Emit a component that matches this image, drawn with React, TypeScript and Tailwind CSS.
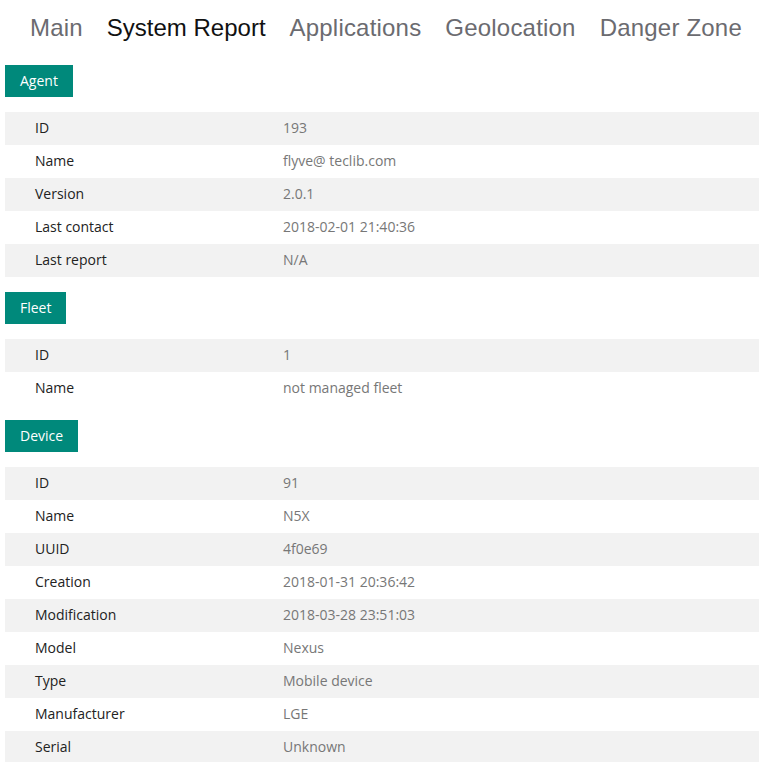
import React from 'react';

const TABS = ['Main', 'System Report', 'Applications', 'Geolocation', 'Danger Zone'];

const SECTIONS: { title: string; rows: [string, string][] }[] = [
    {
        title: 'Agent',
        rows: [
            ['ID', '193'],
            ['Name', 'flyve@ teclib.com'],
            ['Version', '2.0.1'],
            ['Last contact', '2018-02-01 21:40:36'],
            ['Last report', 'N/A'],
        ],
    },
    {
        title: 'Fleet',
        rows: [
            ['ID', '1'],
            ['Name', 'not managed fleet'],
        ],
    },
    {
        title: 'Device',
        rows: [
            ['ID', '91'],
            ['Name', 'N5X'],
            ['UUID', '4f0e69'],
            ['Creation', '2018-01-31 20:36:42'],
            ['Modification', '2018-03-28 23:51:03'],
            ['Model', 'Nexus'],
            ['Type', 'Mobile device'],
            ['Manufacturer', 'LGE'],
            ['Serial', 'Unknown'],
        ],
    },
];

export default function App() {
    return (
        <div className="w-[759px] h-[762px] overflow-hidden bg-white">
            {/* Tabs */}
            <div className="flex items-center h-[56px] pl-[18px] font-['Liberation_Sans',Arial,sans-serif] text-[24px] tracking-[0.2px]">
                {TABS.map((t, i) => (
                    <span key={t} className={`px-3 ${i === 1 ? 'text-[#111] tracking-normal' : 'text-[#6b6b70]'}`}>
                        {t}
                    </span>
                ))}
            </div>

            <div className="pl-[5px] pt-[9px] font-['Open_Sans',sans-serif]">
                {SECTIONS.map(s => (
                    <div key={s.title} className="mb-[15px]">
                        <div className="inline-flex items-center h-[32px] px-[15px] pb-[1px] bg-[#00897b] text-white text-[14px]">
                            {s.title}
                        </div>
                        <div className="mt-[15px]">
                            {s.rows.map(([k, v], i) => (
                                <div
                                    key={k}
                                    className={`flex items-center h-[33px] pb-[3px] text-[14px] ${i % 2 === 0 ? 'bg-[#f2f2f2]' : 'bg-white'}`}
                                >
                                    <span className="w-[278px] pl-[30px] text-[#222]">{k}</span>
                                    <span className="text-[#777]">{v}</span>
                                </div>
                            ))}
                        </div>
                    </div>
                ))}
            </div>
        </div>
    );
}
